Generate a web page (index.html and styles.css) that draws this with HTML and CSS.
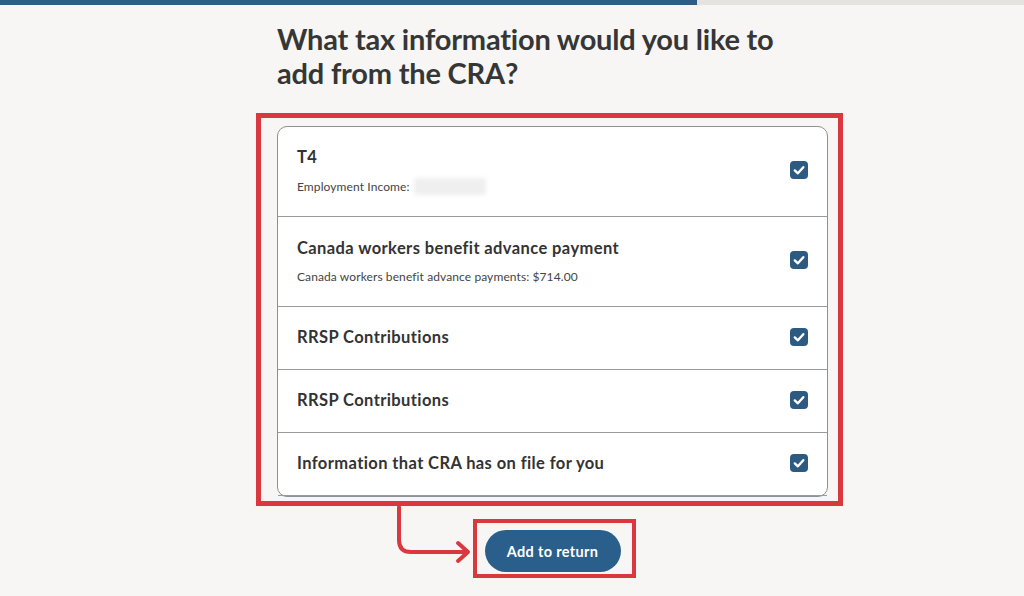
FILE: index.html
```html
<!DOCTYPE html>
<html>
<head>
<meta charset="utf-8">
<link rel="stylesheet" href="styles.css">
</head>
<body>
<div class="progress"><div class="progress-fill"></div></div>
<main class="main">
  <h1 class="heading">What tax information would you like to add from the CRA?</h1>
  <div class="card">
    <div class="row row-tall">
      <div class="row-text">
        <div class="row-title">T4</div>
        <div class="row-sub">Employment Income: <span class="blurred"></span></div>
      </div>
      <svg class="check" viewBox="0 0 18 18" width="18" height="18"><rect width="18" height="18" rx="4" fill="#2c5a80"/><path d="M4.8 9.4 L7.9 12.3 L13.3 6.2" fill="none" stroke="#fff" stroke-width="2.4" stroke-linecap="round" stroke-linejoin="round"/></svg>
    </div>
    <div class="row row-tall">
      <div class="row-text">
        <div class="row-title">Canada workers benefit advance payment</div>
        <div class="row-sub">Canada workers benefit advance payments: $714.00</div>
      </div>
      <svg class="check" viewBox="0 0 18 18" width="18" height="18"><rect width="18" height="18" rx="4" fill="#2c5a80"/><path d="M4.8 9.4 L7.9 12.3 L13.3 6.2" fill="none" stroke="#fff" stroke-width="2.4" stroke-linecap="round" stroke-linejoin="round"/></svg>
    </div>
    <div class="row">
      <div class="row-text"><div class="row-title">RRSP Contributions</div></div>
      <svg class="check" viewBox="0 0 18 18" width="18" height="18"><rect width="18" height="18" rx="4" fill="#2c5a80"/><path d="M4.8 9.4 L7.9 12.3 L13.3 6.2" fill="none" stroke="#fff" stroke-width="2.4" stroke-linecap="round" stroke-linejoin="round"/></svg>
    </div>
    <div class="row">
      <div class="row-text"><div class="row-title">RRSP Contributions</div></div>
      <svg class="check" viewBox="0 0 18 18" width="18" height="18"><rect width="18" height="18" rx="4" fill="#2c5a80"/><path d="M4.8 9.4 L7.9 12.3 L13.3 6.2" fill="none" stroke="#fff" stroke-width="2.4" stroke-linecap="round" stroke-linejoin="round"/></svg>
    </div>
    <div class="row">
      <div class="row-text"><div class="row-title">Information that CRA has on file for you</div></div>
      <svg class="check" viewBox="0 0 18 18" width="18" height="18"><rect width="18" height="18" rx="4" fill="#2c5a80"/><path d="M4.8 9.4 L7.9 12.3 L13.3 6.2" fill="none" stroke="#fff" stroke-width="2.4" stroke-linecap="round" stroke-linejoin="round"/></svg>
    </div>
    <div class="annot annot-card"></div>
  </div>
  <div class="actions">
    <div class="btn-wrap">
      <button class="btn">Add to return</button>
      <div class="annot annot-btn"></div>
    </div>
  </div>
  <svg class="arrow" width="90" height="65" viewBox="0 0 90 65">
    <path d="M9 3 V36 Q9 48 21 48 H77" fill="none" stroke="#d9383e" stroke-width="4" stroke-linecap="round" stroke-linejoin="round"/>
    <path d="M68 39 L78 48 L68 57" fill="none" stroke="#d9383e" stroke-width="4" stroke-linecap="round" stroke-linejoin="round"/>
  </svg>
</main>
</body>
</html>
```
FILE: styles.css
```css
* { box-sizing: border-box; }
html, body { margin: 0; padding: 0; }
body {
  background: #f7f6f4;
  font-family: "Lato", "Open Sans", sans-serif;
  color: #333;
  width: 1024px;
  height: 596px;
  overflow: hidden;
}
.progress {
  height: 5px;
  background: #e5e3e0;
}
.progress-fill {
  width: 697px;
  height: 5px;
  background: #2e5c85;
}
.main {
  position: relative;
  margin-left: 277px;
  width: 551px;
  padding-top: 17px;
}
.heading {
  margin: 0;
  font-size: 29px;
  line-height: 34px;
  font-weight: 700;
  letter-spacing: -0.2px;
  color: #363636;
  width: 530px;
}
.card {
  position: relative;
  margin-top: 36px;
  background: #fff;
  border: 1px solid #909090;
  border-radius: 10px;
}
.row {
  display: flex;
  align-items: center;
  justify-content: space-between;
  height: 63px;
  padding: 0 19px 2px 19px;
  border-bottom: 1px solid #9a9a9a;
}
.row:last-of-type { border-bottom: none; }
.row-tall { height: 90px; padding-bottom: 2px; }
.row-tall .check { margin-bottom: 2px; }
.row-title {
  font-size: 16.5px;
  font-weight: 700;
  line-height: 22px;
  letter-spacing: 0.4px;
  color: #333;
}
.row-sub {
  margin-top: 10px;
  font-size: 12px;
  line-height: 16px;
  letter-spacing: 0.1px;
  color: #444;
  display: flex;
  align-items: center;
}
.blurred {
  display: inline-block;
  width: 72px;
  height: 17px;
  margin-left: 4px;
  background: #efefef;
  border-radius: 3px;
  filter: blur(2px);
}
.check { display: block; flex: none; }
.annot {
  position: absolute;
  border: 5px solid #d9383e;
  pointer-events: none;
}
.annot-card {
  top: -14px;
  left: -22px;
  right: -16px;
  bottom: -10px;
}
.actions {
  display: flex;
  justify-content: center;
  margin-top: 33px;
}
.btn-wrap { position: relative; }
.btn {
  display: block;
  width: 136px;
  height: 42px;
  border: none;
  border-radius: 21px;
  background: #2a5f8b;
  color: #fff;
  font-family: "Lato", "Open Sans", sans-serif;
  font-weight: 700;
  font-size: 14.5px;
  letter-spacing: 0.35px;
}
.annot-btn {
  border-width: 4px;
  top: -11px;
  left: -12px;
  right: -15px;
  bottom: -6px;
}
.arrow {
  position: absolute;
  left: 113px;
  top: 499px;
}
```
